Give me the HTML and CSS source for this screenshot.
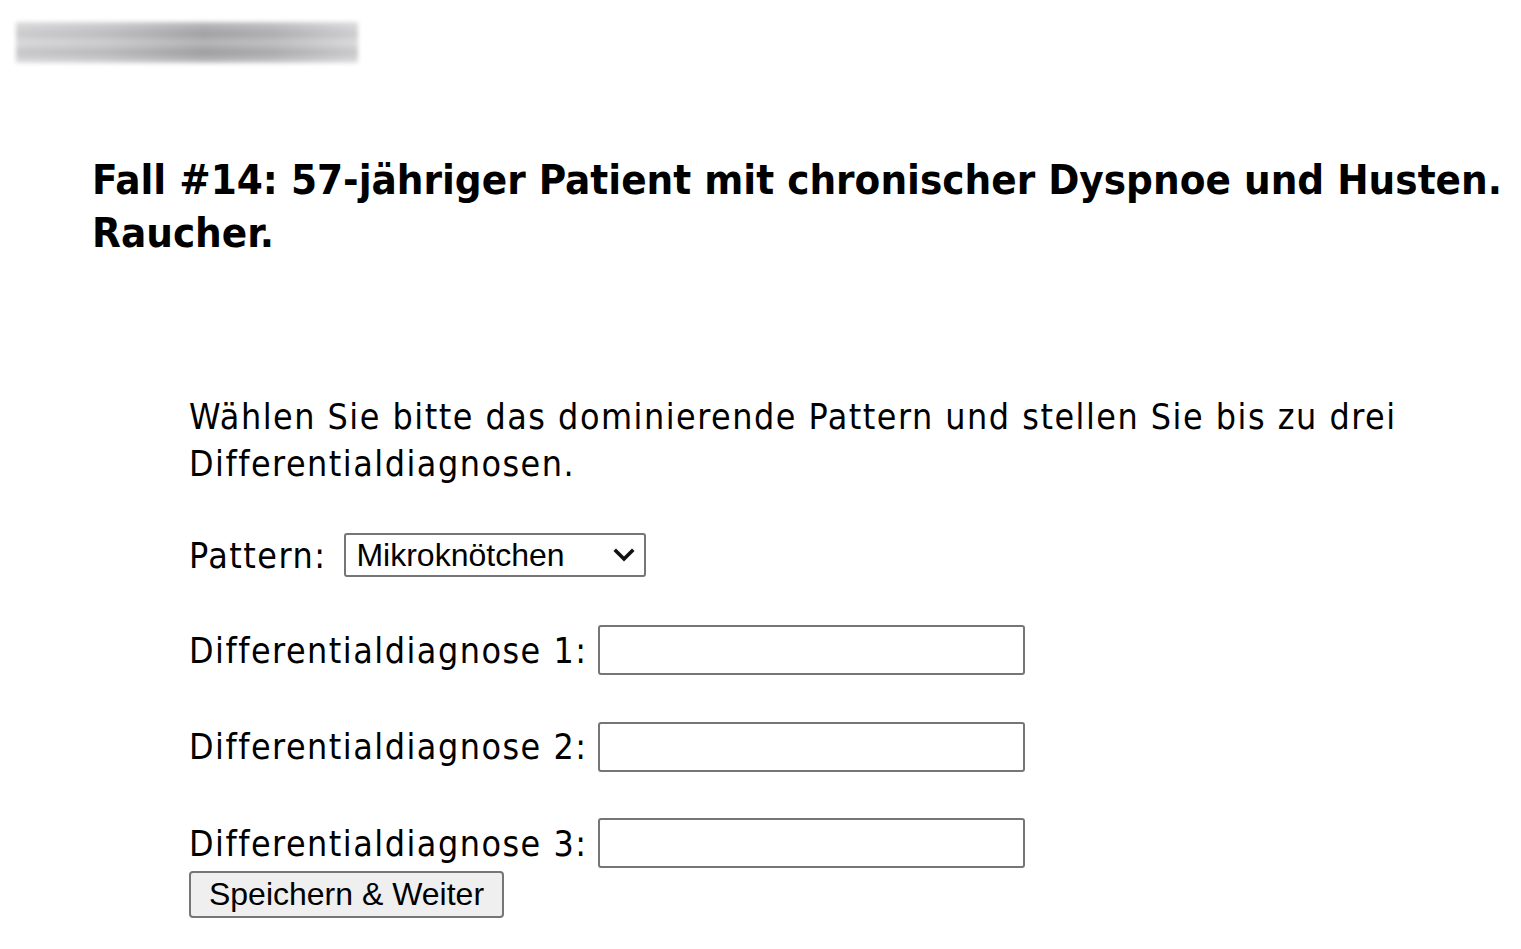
FILE: index.html
```html
<!DOCTYPE html>
<html>
<head>
<meta charset="UTF-8">
<title>Fall #14</title>
<link rel="stylesheet" href="styles.css">
</head>
<body>

<div class="logo"></div>

<h1 class="case_title">Fall #14: 57-jähriger Patient mit chronischer Dyspnoe und Husten. Raucher.</h1>

<form class="case_form" onsubmit="return false;">
	<p class="intro">Wählen Sie bitte das dominierende Pattern und stellen Sie bis zu drei Differentialdiagnosen.</p>

	<div class="row row_pattern">
		<label for="pattern">Pattern:</label>
		<span class="select_wrap">
			<select id="pattern" class="pattern_select">
				<option>Mikroknötchen</option>
				<option>Konsolidierung</option>
				<option>Milchglas</option>
				<option>Retikulär</option>
			</select>
			<svg class="select_arrow" width="22" height="14" viewBox="0 0 22 14">
				<path d="M3 3 L11 11 L19 3" fill="none" stroke="#111" stroke-width="3.6" stroke-linecap="square"/>
			</svg>
		</span>
	</div>

	<div class="row">
		<label for="dd1">Differentialdiagnose 1:</label>
		<input type="text" id="dd1" class="dd_input">
	</div>

	<div class="row">
		<label for="dd2">Differentialdiagnose 2:</label>
		<input type="text" id="dd2" class="dd_input">
	</div>

	<div class="row row_last">
		<label for="dd3">Differentialdiagnose 3:</label>
		<input type="text" id="dd3" class="dd_input">
	</div>

	<button type="submit" class="save_btn">Speichern &amp; Weiter</button>
</form>

</body>
</html>
```

FILE: styles.css
```css
body {
	margin: 0;
	background-color: #ffffff;
	color: #000000;
	font-family: "DejaVu Sans Condensed", "DejaVu Sans", sans-serif;
}
.logo {
	width: 342px;
	height: 41px;
	margin: 22px 0 0 16px;
	background:
		linear-gradient(180deg, rgba(255,255,255,0.25) 0%, rgba(0,0,0,0.04) 30%, rgba(255,255,255,0.2) 50%, rgba(0,0,0,0.06) 75%, rgba(255,255,255,0.3) 100%),
		linear-gradient(90deg, #d2d2d4 0%, #c4c4c7 25%, #a6a6a9 55%, #b3b3b6 75%, #d4d4d6 100%);
	filter: blur(2px);
}
.case_title {
	margin: 90px 0 0 92px;
	font-size: 41.7px;
	line-height: 53px;
	font-weight: bold;
}
.case_form {
	margin: 134px 0 0 189px;
	font-size: 35.5px;
	letter-spacing: 1.5px;
}
.intro {
	margin: 0 0 46px 0;
	line-height: 47px;
	max-width: 1240px;
}
.row {
	display: flex;
	align-items: center;
	gap: 11px;
	margin-bottom: 46.5px;
}
.row_pattern {
	gap: 18px;
	margin-bottom: 48px;
}
.row_last {
	margin-bottom: 3px;
}
.select_wrap {
	position: relative;
	display: inline-block;
	height: 44px;
}
.pattern_select {
	appearance: none;
	-webkit-appearance: none;
	width: 302px;
	height: 44px;
	font-family: "Liberation Sans", Arial, sans-serif;
	font-size: 32px;
	letter-spacing: 0;
	color: #000000;
	border: 2px solid #767676;
	border-radius: 3px;
	background-color: #ffffff;
	padding: 0 0 0 10px;
	margin: 0;
}
.select_arrow {
	position: absolute;
	right: 11px;
	top: 15px;
	pointer-events: none;
}
.dd_input {
	width: 427px;
	height: 50px;
	box-sizing: border-box;
	border: 2px solid #767676;
	border-radius: 3px;
	font-size: 28px;
	margin: 0;
}
.save_btn {
	width: 315px;
	height: 47px;
	font-family: "Liberation Sans", Arial, sans-serif;
	font-size: 32px;
	letter-spacing: 0;
	color: #000000;
	background-color: #efefef;
	border: 2px solid #767676;
	border-radius: 4px;
	padding: 0;
}
```
